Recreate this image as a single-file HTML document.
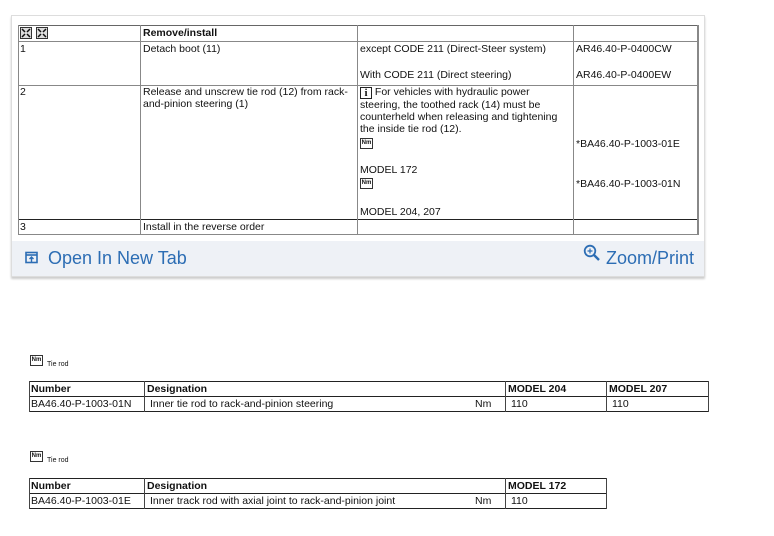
<!DOCTYPE html>
<html><head><meta charset="utf-8"><style>
*{margin:0;padding:0;box-sizing:border-box}
body{width:774px;height:536px;background:#fff;position:relative;overflow:hidden;font-family:"Liberation Sans",Arial,sans-serif;font-size:10.5px;color:#111}
.a{position:absolute}
.card{left:11px;top:15px;width:694px;height:262px;border:1px solid #ddd;box-shadow:0 2px 2px #ccc;background:#fff}
.foot{left:12px;top:241px;width:692px;height:35px;background:#eef1f6}
.h{background:#666;height:1px}
.v{background:#888;width:1px}
.t{line-height:12px;white-space:nowrap}
.nm{display:inline-block;width:13px;height:11px;border:1px solid #333;font-size:6px;font-weight:bold;line-height:9px;text-align:center;background:#fff}
.blue{color:#2c6db4;font-size:18px;white-space:nowrap}
.b{font-weight:bold}
</style></head><body>
<div class="a card"></div>
<div class="a foot"></div>
<div class="a h" style="left:18px;top:25px;width:680px"></div>
<div class="a h" style="left:18px;top:41px;width:680px;background:#888"></div>
<div class="a h" style="left:18px;top:85px;width:680px;background:#888"></div>
<div class="a h" style="left:18px;top:219px;width:680px;background:#222"></div>
<div class="a h" style="left:18px;top:234px;width:680px;background:#888"></div>
<div class="a v" style="left:18px;top:25px;height:210px"></div>
<div class="a v" style="left:140px;top:25px;height:210px"></div>
<div class="a v" style="left:357px;top:25px;height:210px"></div>
<div class="a v" style="left:573px;top:25px;height:210px"></div>
<div class="a v" style="left:697px;top:25px;height:210px;width:2px"></div>
<svg class="a" style="left:20px;top:27px" width="30" height="12"><g fill="none" stroke="#333"><rect x="0.5" y="0.5" width="11" height="11" fill="#ddd"/><rect x="16.5" y="0.5" width="11" height="11" fill="#ddd"/></g><g stroke="#111" stroke-width="1.5"><path d="M2 2l3 3M10 2l-3 3M2 10l3-3M10 10l-3-3M18 2l3 3M26 2l-3 3M18 10l3-3M26 10l-3-3"/></g></svg>
<div class="a t b" style="left:143px;top:27px">Remove/install</div>
<div class="a t" style="left:20px;top:43px">1</div>
<div class="a t" style="left:143px;top:43px">Detach boot (11)</div>
<div class="a t" style="left:360px;top:43px">except CODE 211 (Direct-Steer system)</div>
<div class="a t" style="left:360px;top:69px">With CODE 211 (Direct steering)</div>
<div class="a t" style="left:576px;top:43px">AR46.40-P-0400CW</div>
<div class="a t" style="left:576px;top:69px">AR46.40-P-0400EW</div>
<div class="a t" style="left:20px;top:86px">2</div>
<div class="a t" style="left:143px;top:86px">Release and unscrew tie rod (12) from rack-<br>and-pinion steering (1)</div>
<div class="a t" style="left:360px;top:86px"><span style="display:inline-block;width:12px;height:12px;border:1px solid #222;font:bold 11px 'Liberation Serif',serif;line-height:10px;text-align:center;vertical-align:-1px">i</span> For vehicles with hydraulic power<br>steering, the toothed rack (14) must be<br>counterheld when releasing and tightening<br>the inside tie rod (12).</div>
<div class="a nm" style="left:360px;top:138px">Nm</div>
<div class="a t" style="left:360px;top:164px">MODEL 172</div>
<div class="a nm" style="left:360px;top:178px">Nm</div>
<div class="a t" style="left:360px;top:206px">MODEL 204, 207</div>
<div class="a t" style="left:576px;top:138px">*BA46.40-P-1003-01E</div>
<div class="a t" style="left:576px;top:178px">*BA46.40-P-1003-01N</div>
<div class="a t" style="left:20px;top:221px">3</div>
<div class="a t" style="left:143px;top:221px">Install in the reverse order</div>
<svg class="a" style="left:25px;top:251px" width="14" height="14"><rect x="1" y="1.5" width="11" height="10" fill="none" stroke="#2c6db4" stroke-width="1.6"/><path d="M1 4h11" stroke="#2c6db4" stroke-width="1.6"/><path d="M6.5 11V6M4.5 8l2-2 2 2" stroke="#2c6db4" stroke-width="1.4" fill="none"/></svg>
<div class="a blue" style="left:48px;top:248px">Open In New Tab</div>
<svg class="a" style="left:583px;top:244px" width="18" height="18"><circle cx="7" cy="7" r="5.3" fill="none" stroke="#2c6db4" stroke-width="1.8"/><path d="M11 11l5 5" stroke="#2c6db4" stroke-width="2.4"/><path d="M7 4.5v5M4.5 7h5" stroke="#2c6db4" stroke-width="1.2"/></svg>
<div class="a blue" style="left:606px;top:248px">Zoom/Print</div>
<div class="a nm" style="left:30px;top:355px">Nm</div>
<div class="a" style="left:47px;top:361px;font-size:7px">Tie rod</div>
<div class="a h" style="left:29px;top:381px;width:680px;background:#222"></div>
<div class="a h" style="left:29px;top:396px;width:680px;background:#222"></div>
<div class="a h" style="left:29px;top:411px;width:680px;background:#222"></div>
<div class="a v" style="left:29px;top:381px;height:31px;background:#444"></div>
<div class="a v" style="left:144px;top:381px;height:31px;background:#444"></div>
<div class="a v" style="left:505px;top:381px;height:31px;background:#444"></div>
<div class="a v" style="left:606px;top:381px;height:31px;background:#444"></div>
<div class="a v" style="left:708px;top:381px;height:31px;background:#444"></div>
<div class="a t b" style="left:31px;top:383px">Number</div>
<div class="a t b" style="left:147px;top:383px">Designation</div>
<div class="a t b" style="left:508px;top:383px">MODEL 204</div>
<div class="a t b" style="left:609px;top:383px">MODEL 207</div>
<div class="a t" style="left:31px;top:398px">BA46.40-P-1003-01N</div>
<div class="a t" style="left:150px;top:398px">Inner tie rod to rack-and-pinion steering</div>
<div class="a t" style="left:475px;top:398px">Nm</div>
<div class="a t" style="left:511px;top:398px">110</div>
<div class="a t" style="left:612px;top:398px">110</div>
<div class="a nm" style="left:30px;top:451px">Nm</div>
<div class="a" style="left:47px;top:457px;font-size:7px">Tie rod</div>
<div class="a h" style="left:29px;top:478px;width:578px;background:#222"></div>
<div class="a h" style="left:29px;top:493px;width:578px;background:#222"></div>
<div class="a h" style="left:29px;top:508px;width:578px;background:#222"></div>
<div class="a v" style="left:29px;top:478px;height:31px;background:#444"></div>
<div class="a v" style="left:144px;top:478px;height:31px;background:#444"></div>
<div class="a v" style="left:505px;top:478px;height:31px;background:#444"></div>
<div class="a v" style="left:606px;top:478px;height:31px;background:#444"></div>
<div class="a t b" style="left:31px;top:480px">Number</div>
<div class="a t b" style="left:147px;top:480px">Designation</div>
<div class="a t b" style="left:508px;top:480px">MODEL 172</div>
<div class="a t" style="left:31px;top:495px">BA46.40-P-1003-01E</div>
<div class="a t" style="left:150px;top:495px">Inner track rod with axial joint to rack-and-pinion joint</div>
<div class="a t" style="left:475px;top:495px">Nm</div>
<div class="a t" style="left:511px;top:495px">110</div>
</body></html>
